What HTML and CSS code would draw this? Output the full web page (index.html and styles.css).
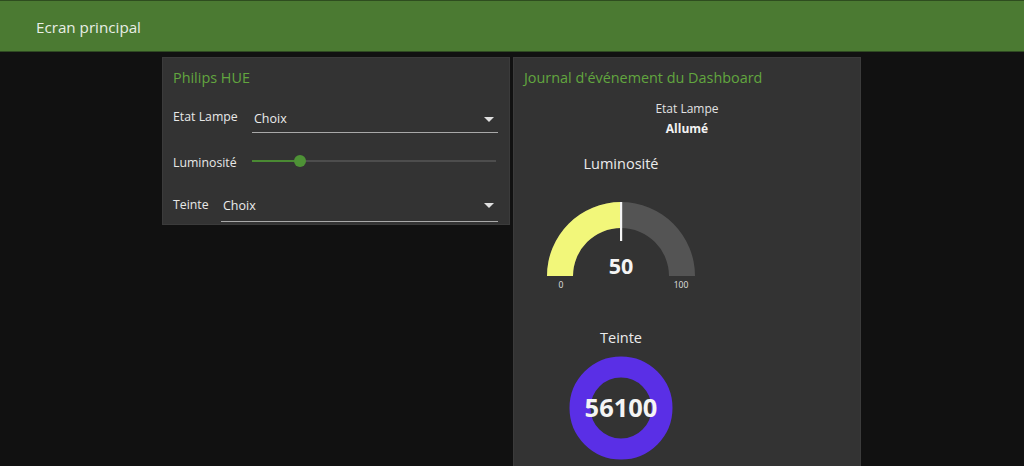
FILE: index.html
```html
<!DOCTYPE html>
<html lang="fr">
<head>
<meta charset="utf-8">
<title>Ecran principal</title>
<link rel="stylesheet" href="styles.css">
</head>
<body>
<header class="toolbar">
  <h1 class="toolbar-title">Ecran principal</h1>
</header>
<main class="content">
  <section class="card card-controls">
    <h2 class="card-title">Philips HUE</h2>
    <div class="row row-select1">
      <span class="label">Etat Lampe</span>
      <div class="select">
        <span class="select-value">Choix</span>
        <span class="select-arrow"></span>
      </div>
    </div>
    <div class="row row-slider">
      <span class="label">Luminosité</span>
      <div class="slider">
        <div class="slider-fill" style="width: 19.5%"></div>
        <div class="slider-thumb" style="left: 19.5%"></div>
      </div>
    </div>
    <div class="row row-select2">
      <span class="label">Teinte</span>
      <div class="select">
        <span class="select-value">Choix</span>
        <span class="select-arrow"></span>
      </div>
    </div>
  </section>
  <section class="card card-log">
    <h2 class="card-title">Journal d'événement du Dashboard</h2>
    <div class="state">
      <div class="state-label">Etat Lampe</div>
      <div class="state-value">Allumé</div>
    </div>
    <div class="widget widget-gauge">
      <div class="widget-title">Luminosité</div>
      <svg class="gauge" width="160" height="100" viewBox="0 0 160 100">
        <path d="M6 84 A74 74 0 0 1 154 84 L128 84 A48 48 0 0 0 32 84 Z" fill="#545454"/>
        <path d="M6 84 A74 74 0 0 1 80 10 L80 36 A48 48 0 0 0 32 84 Z" fill="#f2f77a"/>
        <rect x="79" y="10" width="2.2" height="39" fill="#f4f4f4"/>
        <text x="80" y="82" class="gauge-value" text-anchor="middle">50</text>
        <text x="20" y="96" class="gauge-scale" text-anchor="middle">0</text>
        <text x="140" y="96" class="gauge-scale" text-anchor="middle">100</text>
      </svg>
    </div>
    <div class="widget widget-donut">
      <div class="widget-title">Teinte</div>
      <svg class="donut" width="120" height="110" viewBox="0 0 120 110">
        <circle cx="60" cy="55" r="41" fill="none" stroke="#5a2fe6" stroke-width="21"/>
        <text x="60" y="64" class="donut-value" text-anchor="middle">56100</text>
      </svg>
    </div>
  </section>
</main>
</body>
</html>
```
FILE: styles.css
```css
html, body {
  margin: 0;
  padding: 0;
}
body {
  background: #111111;
  font-family: "Open Sans", "Noto Sans", sans-serif;
  color: #e6e6e6;
  height: 466px;
  overflow: hidden;
}
.toolbar {
  height: 50px;
  background: #4b7a32;
  border-top: 1px solid #2e4d1f;
  border-bottom: 1px solid #2f4a22;
  display: flex;
  align-items: center;
  padding-left: 36px;
  box-sizing: content-box;
}
.toolbar-title {
  margin: 0;
  font-size: 15.2px;
  font-weight: 400;
  color: #e9eee6;
  padding-top: 2px;
}
.content {
  display: flex;
  justify-content: center;
  align-items: flex-start;
  gap: 3px;
  padding-top: 5px;
  padding-right: 1px;
}
.card {
  width: 348px;
  background: #333333;
  border: 1px solid #3b3b3b;
  box-sizing: border-box;
}
.card-controls {
  height: 168px;
  padding: 0 11px 0 10px;
}
.card-log {
  height: 420px;
  padding: 0 10px;
}
.card-title {
  margin: 0;
  font-size: 14.4px;
  font-weight: 400;
  color: #62a63f;
  height: 39px;
  line-height: 40px;
}
.row {
  display: flex;
  font-size: 12.3px;
}
.label {
  color: #e8e8e8;
}
.select {
  flex: 1;
  border-bottom: 1px solid #a9a9a9;
  display: flex;
  justify-content: space-between;
  align-items: flex-start;
  padding: 0 4px 0 2px;
  box-sizing: border-box;
}
.select-value {
  color: #ececec;
  font-size: 12.5px;
}
.select-arrow {
  width: 0;
  height: 0;
  border-left: 5px solid transparent;
  border-right: 5px solid transparent;
  border-top: 5px solid #e0e0e0;
}
.row-select1 {
  height: 43px;
}
.row-select1 .label {
  width: 79px;
  padding-top: 11px;
}
.row-select1 .select {
  height: 36px;
}
.row-select1 .select-value {
  padding-top: 13px;
}
.row-select1 .select-arrow {
  margin-top: 20px;
}
.row-slider {
  height: 45px;
  align-items: center;
}
.row-slider .label {
  width: 79px;
}
.slider {
  position: relative;
  flex: 1;
  height: 2px;
  background: #4d4d4d;
  margin-right: 2px;
  margin-top: -3px;
}
.slider-fill {
  position: absolute;
  left: 0;
  top: 0;
  height: 2px;
  background: #4a8a33;
}
.slider-thumb {
  position: absolute;
  top: -5px;
  width: 12px;
  height: 12px;
  margin-left: -6px;
  border-radius: 50%;
  background: #4e9236;
}
.row-select2 {
  height: 41px;
}
.row-select2 .label {
  width: 48px;
  padding-top: 11px;
}
.row-select2 .select {
  height: 37px;
}
.row-select2 .select-value {
  padding-top: 12px;
}
.row-select2 .select-arrow {
  margin-top: 18px;
}
.state {
  text-align: center;
  font-size: 12px;
  line-height: 20px;
  padding-top: 2px;
}
.state-label {
  color: #e2e2e2;
}
.state-value {
  font-weight: 700;
  color: #f2f2f2;
}
.widget {
  width: 194px;
  display: flex;
  flex-direction: column;
  align-items: center;
}
.widget-gauge {
  margin-top: 12px;
}
.widget-title {
  font-size: 14.5px;
  color: #ececec;
  margin-top: 3px;
  height: 30px;
}
.gauge {
  display: block;
  margin-top: 8px;
}
.gauge-value {
  font-family: "Open Sans", sans-serif;
  font-weight: 700;
  font-size: 21.5px;
  fill: #f4f4f4;
}
.gauge-scale {
  font-family: "Open Sans", sans-serif;
  font-size: 8.5px;
  fill: #e0e0e0;
}
.widget-donut {
  margin-top: 33px;
}
.widget-donut .widget-title {
  height: 25px;
}
.donut {
  display: block;
}
.donut-value {
  font-family: "Open Sans", sans-serif;
  font-weight: 700;
  font-size: 25.5px;
  fill: #f4f4f4;
}
```
